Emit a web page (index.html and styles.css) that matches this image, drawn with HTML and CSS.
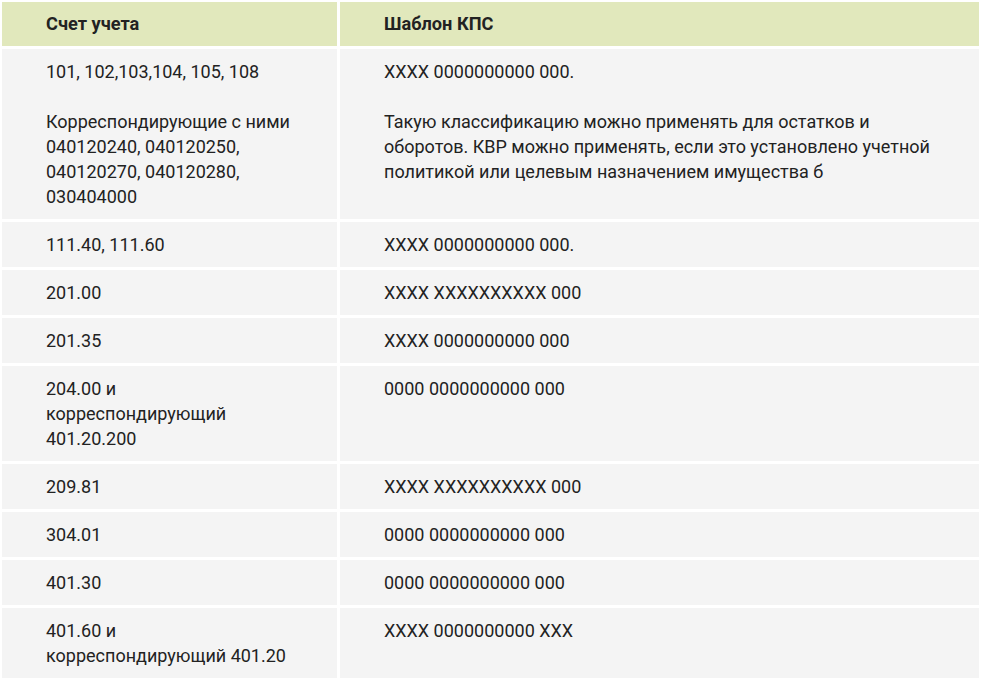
FILE: index.html
```html
<!DOCTYPE html>
<html lang="ru">
<head>
<meta charset="utf-8">
<link rel="stylesheet" href="styles.css">
</head>
<body>
<table class="kps">
  <colgroup><col class="c1"><col class="c2"></colgroup>
  <thead>
    <tr><th>Счет учета</th><th>Шаблон КПС</th></tr>
  </thead>
  <tbody>
    <tr>
      <td><p>101, 102,103,104, 105, 108</p><p>Корреспондирующие с ними 040120240, 040120250, 040120270, 040120280, 030404000</p></td>
      <td><p>XXXX 0000000000 000.</p><p>Такую классификацию можно применять для остатков и оборотов. КВР можно применять, если это установлено учетной политикой или целевым назначением имущества б</p></td>
    </tr>
    <tr><td>111.40, 111.60</td><td>XXXX 0000000000 000.</td></tr>
    <tr><td>201.00</td><td>XXXX XXXXXXXXXX 000</td></tr>
    <tr><td>201.35</td><td>XXXX 0000000000 000</td></tr>
    <tr><td>204.00 и корреспондирующий 401.20.200</td><td>0000 0000000000 000</td></tr>
    <tr><td>209.81</td><td>XXXX XXXXXXXXXX 000</td></tr>
    <tr><td>304.01</td><td>0000 0000000000 000</td></tr>
    <tr><td>401.30</td><td>0000 0000000000 000</td></tr>
    <tr><td>401.60 и корреспондирующий 401.20</td><td>XXXX 0000000000 XXX</td></tr>
  </tbody>
</table>
</body>
</html>
```
FILE: styles.css
```css
html, body {
  margin: 0;
  padding: 0;
  background: #ffffff;
}
body {
  font-family: Roboto, "Liberation Sans", sans-serif;
  font-size: 18px;
  color: #222222;
  overflow: hidden;
}
.kps {
  width: 983px;
  margin: -1px 0 0 -1px;
  border-collapse: separate;
  border-spacing: 3px;
  table-layout: fixed;
}
.c1 { width: 335px; }
.c2 { width: 639px; }
.kps th,
.kps td {
  padding: 10px 44px;
  text-align: left;
  vertical-align: top;
  line-height: 25px;
}
.kps th {
  background: #e1e8bc;
  font-size: 18.2px;
  font-weight: 700;
  line-height: 24px;
  color: #222222;
}
.kps td {
  background: #f4f4f4;
}
.kps p {
  margin: 0 0 25px;
}
.kps p:last-child {
  margin-bottom: 0;
}
```
